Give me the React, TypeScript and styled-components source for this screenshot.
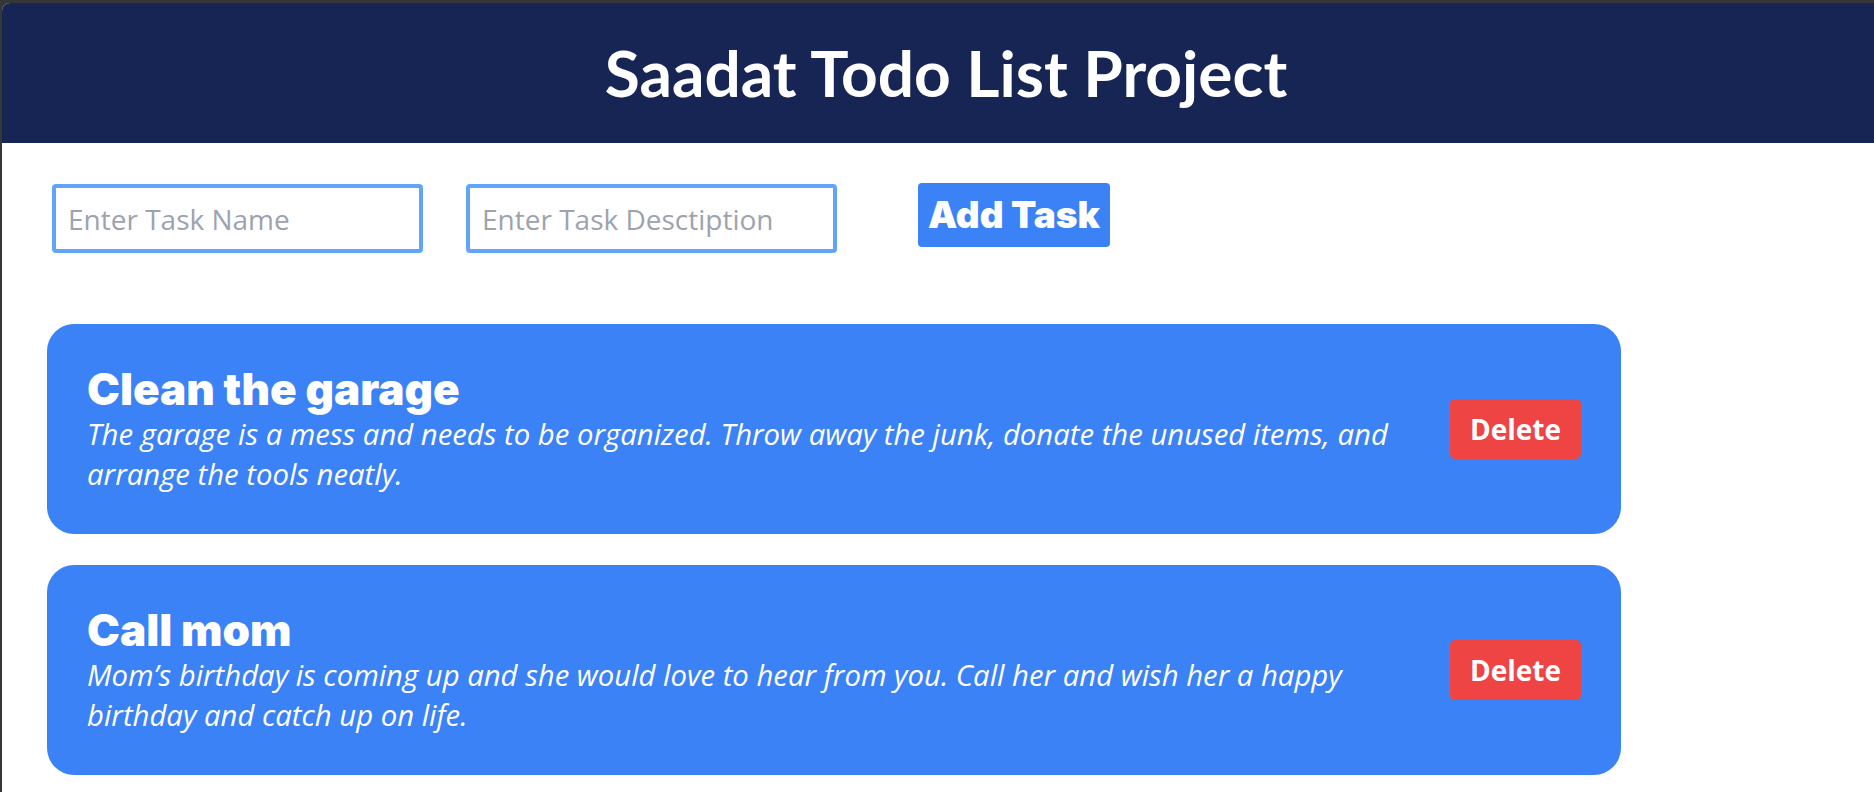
import React from "react";
import styled, { createGlobalStyle } from "styled-components";

const GlobalStyle = createGlobalStyle`
  html, body {
    margin: 0;
    padding: 0;
    background: #363636;
    font-family: "Open Sans", "Noto Sans", sans-serif;
  }
  * { box-sizing: border-box; }
`;

const Window = styled.div`
  margin: 3px 0 0 2px;
  height: calc(100vh - 3px);
  background: #ffffff;
  border-top-left-radius: 8px;
  overflow: hidden;
`;

const Header = styled.header`
  height: 140px;
  background: #172554;
  display: flex;
  align-items: center;
  justify-content: center;
  padding-left: 16px;
`;

const Title = styled.h1`
  margin: 0;
  color: #ffffff;
  font-family: "Lato", "Open Sans", sans-serif;
  font-weight: 700;
  font-size: 64px;
  line-height: 1;
`;

const Main = styled.main`
  padding: 41px 0 0 45px;
`;

const FormRow = styled.div`
  display: flex;
  align-items: flex-start;
`;

const TextInput = styled.input<{ $gap: number }>`
  width: 371px;
  height: 69px;
  margin-left: ${(p) => p.$gap}px;
  border: 4px solid #60a5fa;
  border-radius: 4px;
  padding: 0 12px;
  font-family: "Open Sans", sans-serif;
  font-size: 28px;
  color: #111827;
  outline: none;
  &::placeholder {
    color: #9ca3af;
  }
`;

const AddButton = styled.button`
  margin-left: 81px;
  margin-top: -1px;
  height: 64px;
  padding: 0 10px;
  border: none;
  border-radius: 4px;
  background: #3b82f6;
  color: #ffffff;
  font-family: "Inter", "Open Sans", sans-serif;
  font-weight: 900;
  font-size: 37px;
  line-height: 44px;
  cursor: pointer;
`;

const TaskList = styled.ul`
  list-style: none;
  margin: 71px 0 0 0;
  padding: 0;
  display: flex;
  flex-direction: column;
  gap: 31px;
`;

const TaskCard = styled.li`
  width: 1574px;
  min-height: 209px;
  background: #3b82f6;
  border-radius: 27px;
  padding: 40px;
  display: flex;
  align-items: center;
  justify-content: space-between;
  color: #ffffff;
`;

const TaskText = styled.div`
  flex: 1;
  min-width: 0;
  margin-right: 48px;
`;

const TaskTitle = styled.h2`
  margin: 0;
  font-family: "Inter", "Open Sans", sans-serif;
  font-weight: 900;
  font-size: 44px;
  line-height: 50px;
`;

const TaskDesc = styled.p`
  margin: 0;
  font-family: "Open Sans", sans-serif;
  font-style: italic;
  font-size: 29.3px;
  line-height: 40px;
`;

const DeleteButton = styled.button`
  flex-shrink: 0;
  height: 60px;
  padding: 0 20px;
  border: none;
  border-radius: 5px;
  background: #ef4444;
  color: #ffffff;
  font-family: "Open Sans", sans-serif;
  font-weight: 700;
  font-size: 28px;
  line-height: 40px;
  cursor: pointer;
`;

const tasks = [
  {
    name: "Clean the garage",
    description:
      "The garage is a mess and needs to be organized. Throw away the junk, donate the unused items, and arrange the tools neatly.",
  },
  {
    name: "Call mom",
    description:
      "Mom\u2019s birthday is coming up and she would love to hear from you. Call her and wish her a happy birthday and catch up on life.",
  },
];

export default function App() {
  return (
    <>
      <GlobalStyle />
      <Window>
        <Header>
          <Title>Saadat Todo List Project</Title>
        </Header>
        <Main>
          <FormRow>
            <TextInput $gap={5} placeholder="Enter Task Name" />
            <TextInput $gap={43} placeholder="Enter Task Desctiption" />
            <AddButton>Add Task</AddButton>
          </FormRow>
          <TaskList>
            {tasks.map((t) => (
              <TaskCard key={t.name}>
                <TaskText>
                  <TaskTitle>{t.name}</TaskTitle>
                  <TaskDesc>{t.description}</TaskDesc>
                </TaskText>
                <DeleteButton>Delete</DeleteButton>
              </TaskCard>
            ))}
          </TaskList>
        </Main>
      </Window>
    </>
  );
}
